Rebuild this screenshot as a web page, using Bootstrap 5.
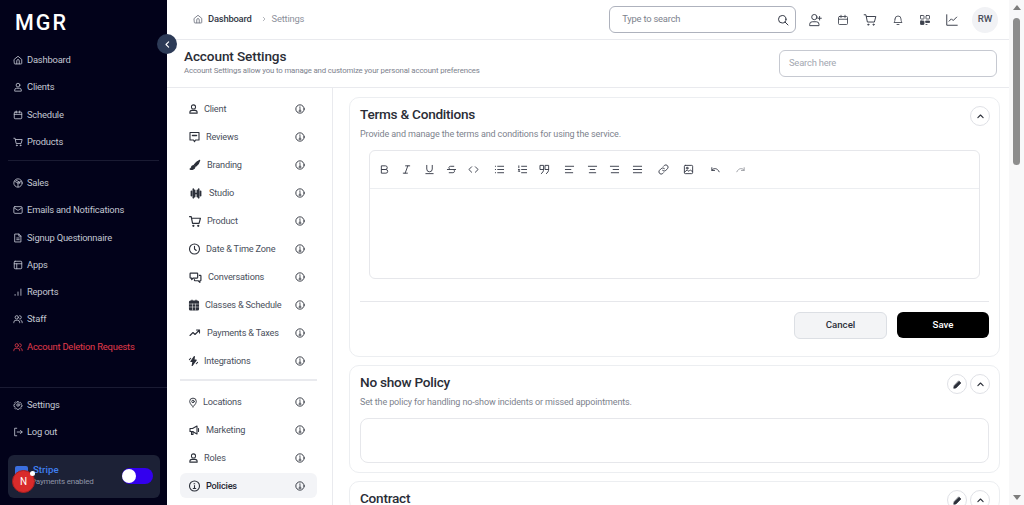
<!DOCTYPE html>
<html lang="en">
<head>
    <meta charset="UTF-8">
    <meta name="viewport" content="width=device-width, initial-scale=1.0">
    <title>Account Settings</title>
    <link href="https://cdn.jsdelivr.net/npm/bootstrap@5.3.0/dist/css/bootstrap.min.css" rel="stylesheet">
    <style>
        html, body { height: 505px; overflow: hidden; }
        body { font-family: Roboto, "Noto Sans", sans-serif; color: #1f2430; background: #fff; }
        .ic { fill: none; stroke: currentColor; stroke-width: 2; stroke-linecap: round; stroke-linejoin: round; flex: none; }
        .page-wrap { height: 505px; }

        /* sidebar */
        .side { width: 167px; flex: none; background: #02021a; color: #c3c7d2; height: 505px; }
        .side-logo { color: #fff; font-size: 21.5px; font-weight: 500; letter-spacing: 2px; padding: 9px 0 0 15px; height: 46.5px; line-height: 27px; }
        .side-link { height: 27.25px; flex: none; padding-left: 13px; gap: 4px; font-size: 9.4px; letter-spacing: -.2px; color: #c3c7d2; text-decoration: none; }
        .side-link.danger { color: #e23b4b; }
        .side-rule { height: 1px; background: #1a1b33; flex: none; }
        .side-rule.upper { margin: 4px 8px 9px; }
        .side-rule.lower { margin-bottom: 4px; }
        .stripe-box { margin: 9px 7px 7px 8px; height: 43px; background: #1c2136; border-radius: 6px; }
        .stripe-flag { width: 13px; height: 11px; background: #3b6fe0; border-radius: 2px; position: absolute; left: 7px; top: 11px; }
        .stripe-name { color: #3f7ff0; font-size: 9.7px; font-weight: 500; line-height: 12px; padding-left: 25px; padding-top: 9px; }
        .stripe-sub { color: #8f94a6; font-size: 8px; letter-spacing: -.2px; line-height: 11px; padding-left: 23px; white-space: nowrap; }
        .stripe-toggle { position: absolute; right: 7px; top: 13px; width: 31px; height: 16px; border-radius: 8px; background: #3300ee; }
        .stripe-toggle i { position: absolute; left: 0; top: 1px; width: 14px; height: 14px; border-radius: 50%; background: #fff; }
        .dev-badge { position: absolute; left: 12px; top: 470px; width: 23px; height: 23px; border-radius: 50%; background: #d92b2b; color: #fff; font-size: 10px; line-height: 21px; text-align: center; border: 1px solid #a81f1f; }
        .dev-dot { position: absolute; left: 30px; top: 471px; width: 5px; height: 5px; border-radius: 50%; background: #fff; }
        .collapse-btn { position: absolute; left: 157px; top: 34px; width: 20px; height: 20px; border-radius: 50%; background: #2d3b57; color: #fff; z-index: 5; }

        /* header */
        .top-bar { height: 40px; flex: none; border-bottom: 1px solid #e9eaee; padding-left: 26px; padding-right: 11px; }
        .crumb { font-size: 9.4px; letter-spacing: -.2px; color: #8c909b; }
        .crumb b { color: #333845; font-weight: 500; }
        .crumb-home { color: #6b707c; margin-right: 5px; }
        .crumb-sep { color: #6b707c; margin: 0 5px 0 9px; }
        .top-search { width: 187px; height: 27px; flex: none; border: 1px solid #aeb2bd; border-radius: 6px; padding: 0 6px 0 12px; font-size: 9.4px; letter-spacing: -.2px; color: #7d828d; margin-right: 5.5px; }
        .top-search .ic { color: #333845; }
        .top-icon { width: 27.4px; color: #3d424e; }
        .top-icon .ic { stroke-width: 1.7; }
        .avatar-rw { width: 26px; height: 26px; margin-left: 6px; border-radius: 50%; background: #f1f2f5; color: #4a4f5c; font-size: 9.7px; font-weight: 500; }

        /* title row */
        .title-row { height: 48px; flex: none; border-bottom: 1px solid #e9eaee; padding: 0 12px 0 17px; }
        .title-block { padding-bottom: 3px; }
        .title-row h1 { font-size: 13.6px; font-weight: 500; letter-spacing: -.12px; margin: 0; line-height: 17px; color: #2a2d36; }
        .title-row p { font-size: 7.8px; letter-spacing: -.14px; color: #7d828d; margin: 0; line-height: 11px; }
        .page-search { width: 218px; height: 27px; border: 1px solid #c6c9d1; border-radius: 6px; padding-left: 9px; font-size: 9.4px; letter-spacing: -.2px; color: #a3a7b1; }

        /* settings menu */
        .set-menu { width: 166px; border-right: 1px solid #e9eaee; padding: 7px 15px 0 13px; flex: none; height: 417px; }
        .set-item { height: 28px; font-size: 9.2px; letter-spacing: -.2px; color: #4a4f5c; padding: 0 12px 0 8px; border-radius: 6px; }
        .set-item .ic { color: #2c303a; stroke-width: 2.2; }
        .set-item .name { flex: 1; margin-left: 5px; white-space: nowrap; }
        .set-item.on { background: #f3f4f7; color: #1f2430; font-weight: 500; height: 25px; margin-top: 1px; }
        .set-rule { height: 2px; background: #e9eaee; margin: 4px 0 7px; }

        /* panels */
        .panels { padding: 9px 9px 0 16px; flex: 1; min-width: 0; }
        .panel { border: 1px solid #eceef1; border-radius: 10px; padding: 6px 9px 0 10px; margin-bottom: 8px; flex: none; }
        .panel h2 { font-size: 13.6px; font-weight: 500; letter-spacing: -.25px; margin: 0; line-height: 20px; color: #2a2d36; }
        .panel p { font-size: 9px; letter-spacing: -.13px; color: #7d828d; margin: 3px 0 0; line-height: 14px; }
        .round-btn { width: 20px; height: 20px; margin-top: 2px; border: 1px solid #dfe1e6; border-radius: 50%; color: #2c303a; background: #fff; }
        .editor { margin: 9px 10px 0 9px; height: 129px; border: 1px solid #e6e7eb; border-radius: 6px; }
        .editor-tools { height: 38px; border-bottom: 1px solid #eceef1; padding-left: 3px; color: #333845; }
        .tool { width: 22.45px; display: flex; justify-content: center; }
        .tool-gap-s { margin-left: 2.5px; }
        .tool-gap-m { margin-left: 3.5px; }
        .tool-gap-l { margin-left: 4.5px; }
        .panel-rule { height: 1px; background: #e6e7eb; margin: 22px 1px 0 0; }
        .btn-row { gap: 10px; margin: 10px 1px 0 0; }
        .btn-cancel { width: 93px; height: 27px; background: #f3f4f6; border: 1px solid #dcdfe4; border-radius: 6px; color: #2c303a; font-size: 9.7px; font-weight: 500; padding: 0; }
        .btn-save { width: 92px; height: 26px; background: #000; border: 0; border-radius: 6px; color: #fff; font-size: 9.7px; font-weight: 500; padding: 0; }
        .policy-box { height: 45px; border: 1px solid #e6e7eb; border-radius: 8px; margin: 9px 1px 0 0; }
        .btn-pair { gap: 3px; }

        /* scrollbar */
        .fake-scroll { width: 15px; background: #f8f8f9; flex: none; }
        .fake-thumb { width: 7px; height: 147px; background: #8d8d8d; border-radius: 4px; margin: 18px auto 0; }
        .arrow-up { position: absolute; left: 1013px; top: 5px; border: 4px solid transparent; border-top: 0; border-bottom: 5px solid #7d7d7d; }
        .arrow-down { position: absolute; left: 1013px; top: 495px; border: 4px solid transparent; border-bottom: 0; border-top: 5px solid #7d7d7d; }
    </style>
</head>
<body>
    <svg width="0" height="0" class="position-absolute">
        <symbol id="home" viewBox="0 0 24 24"><path d="M3 10.500 12 3l9 7.500V20a1.500 1.500 0 0 1-1.500 1.500h-15A1.500 1.500 0 0 1 3 20z"/><path d="M9 21v-7a3 3 0 0 1 6 0v7"/></symbol>
        <symbol id="user" viewBox="0 0 24 24"><circle cx="12" cy="7.500" r="4.500"/><path d="M4 21v-1.500A4.500 4.500 0 0 1 8.500 15h7a4.500 4.500 0 0 1 4.500 4.500V21z"/></symbol>
        <symbol id="cal" viewBox="0 0 24 24"><rect x="3" y="5" width="18" height="16" rx="2"/><path d="M8 2.500V7M16 2.500V7M3 10.500h18"/></symbol>
        <symbol id="cart" viewBox="0 0 24 24"><path d="M2 3h3l2.500 12.500h12L22 6H6"/><circle cx="9" cy="20" r="1"/><circle cx="18" cy="20" r="1"/></symbol>
        <symbol id="box" viewBox="0 0 24 24"><circle cx="12" cy="12" r="10"/><path d="M12 12 4 8M12 12l8-4M12 12v9M8 5.500l8 4.500v3"/></symbol>
        <symbol id="mail" viewBox="0 0 24 24"><rect x="2" y="4" width="20" height="16" rx="2.500"/><path d="m3 7 9 6 9-6"/></symbol>
        <symbol id="file" viewBox="0 0 24 24"><path d="M5 2.500h9l5 5V21.500H5z"/><path d="M14 2.500v5h5M9 12h6M9 16h6"/></symbol>
        <symbol id="apps" viewBox="0 0 24 24"><rect x="3" y="3" width="18" height="18" rx="2"/><path d="M3 9h18M9 9v12"/></symbol>
        <symbol id="bars" viewBox="0 0 24 24"><path d="M5 20v-2M12 20v-8M19 20V5"/></symbol>
        <symbol id="users" viewBox="0 0 24 24"><circle cx="9" cy="8" r="4"/><path d="M2 21v-1a5 5 0 0 1 5-5h4a5 5 0 0 1 5 5v1M16 4a4 4 0 0 1 0 8M19 15a4.500 4.500 0 0 1 3 4.500V21"/></symbol>
        <symbol id="gear" viewBox="0 0 24 24"><circle cx="12" cy="12" r="3"/><path d="M10.300 3h3.400l.6 2.700 1.900.8 2.300-1.500 2.400 2.400-1.500 2.300.8 1.900 2.700.6v3.400l-2.700.6-.8 1.900 1.500 2.300-2.400 2.400-2.300-1.500-1.900.8-.6 2.700h-3.400l-.6-2.700-1.900-.8-2.300 1.500-2.400-2.400 1.500-2.300-.8-1.900-2.700-.6V10.800l2.700-.6.8-1.900L3.100 6l2.400-2.400 2.300 1.500 1.900-.8z" transform="translate(1.200 1.200) scale(.9)"/></symbol>
        <symbol id="logout" viewBox="0 0 24 24"><path d="M9 3H4v18h5M10 12h12M18 8l4 4-4 4"/></symbol>
        <symbol id="info" viewBox="0 0 24 24"><circle cx="12" cy="12" r="10"/><path d="M12 11v6M9.500 17h5M11 7.500h1.500"/></symbol>
        <symbol id="search" viewBox="0 0 24 24"><circle cx="10.500" cy="10.500" r="7.500"/><path d="m16 16 6 6"/></symbol>
        <symbol id="adduser" viewBox="0 0 24 24"><circle cx="10" cy="7" r="4.500"/><path d="M2 21v-1.500A4.500 4.500 0 0 1 6.500 15h7a4.500 4.500 0 0 1 4.500 4.500V21zM19 6v6M16 9h6"/></symbol>
        <symbol id="bell" viewBox="0 0 24 24"><path d="M6 10a6 6 0 0 1 12 0c0 5 2 7 2 7H4s2-2 2-7M10 21h4"/></symbol>
        <symbol id="qr" viewBox="0 0 24 24"><rect x="3" y="3" width="7" height="7" rx="1"/><rect x="14" y="3" width="7" height="7" rx="1"/><rect x="3" y="14" width="7" height="7" rx="1" fill="currentColor"/><path d="M14 14h7v3h-7zM14 21h2" fill="currentColor"/></symbol>
        <symbol id="chart" viewBox="0 0 24 24"><path d="M3 3v18h18M7 14l4-4 3 3 6-6"/></symbol>
        <symbol id="chat" viewBox="0 0 24 24"><path d="M3 3h18v15h-7l-2 3.500-2-3.500H3z"/><path d="M8 9h8" stroke-width="3"/></symbol>
        <symbol id="brush" viewBox="0 0 24 24"><path d="M21.500 2.500c-5 2-9 6-11 9l3 3c3-2 7-6 8-12z" fill="currentColor"/><path d="M9 13c-3 0-4 2-4.500 4.500-.3 1.500-1.500 2-2.500 2.500 3 2 9 1 10-4z" fill="currentColor"/></symbol>
        <symbol id="dumb" viewBox="0 0 24 24"><path d="M9 12h6" stroke-width="2.500"/><path d="M7 4v16M9.500 6v12M17 4v16M14.500 6v12M3.500 8v8M20.500 8v8" stroke-width="3"/></symbol>
        <symbol id="clock" viewBox="0 0 24 24"><circle cx="12" cy="12" r="10"/><path d="M12 6.500V12l3.500 3"/></symbol>
        <symbol id="chats" viewBox="0 0 24 24"><path d="M3 4h12a1 1 0 0 1 1 1v7a1 1 0 0 1-1 1H8l-3 3v-3H3a1 1 0 0 1-1-1V5a1 1 0 0 1 1-1z"/><path d="M19 8h2a1 1 0 0 1 1 1v8a1 1 0 0 1-1 1h-1v3l-3-3h-6a1 1 0 0 1-1-1v-1"/></symbol>
        <symbol id="grid" viewBox="0 0 24 24"><rect x="3" y="4" width="18" height="18" rx="2" fill="currentColor"/><path d="M3 10h18M9 10v12M15 10v12M3 16h18" stroke="#fff" stroke-width="1"/><path d="M8 2v3M16 2v3"/></symbol>
        <symbol id="trend" viewBox="0 0 24 24"><path d="m2 17 6-6 4 4 9-9M15 6h6v6"/></symbol>
        <symbol id="bolt" viewBox="0 0 24 24"><path d="M14 2 6 13h5l-2 9 9-12h-5z" fill="currentColor"/><path d="M3 9l3-3M21 15l-3 3"/></symbol>
        <symbol id="pin" viewBox="0 0 24 24"><path d="M12 22s8-6.500 8-12.500a8 8 0 0 0-16 0C4 15.500 12 22 12 22z"/><circle cx="12" cy="9.500" r="3"/></symbol>
        <symbol id="mega" viewBox="0 0 24 24"><path d="M3 9h5l9-5v16l-9-5H3z"/><path d="M6 15v6h3v-6M20 9v6"/></symbol>
        <symbol id="left" viewBox="0 0 24 24"><path d="m15 5-7 7 7 7" stroke-width="3"/></symbol>
        <symbol id="right" viewBox="0 0 24 24"><path d="m9 5 7 7-7 7"/></symbol>
        <symbol id="up" viewBox="0 0 24 24"><path d="m5 15 7-7 7 7" stroke-width="3"/></symbol>
        <symbol id="pencil" viewBox="0 0 24 24"><path d="M16 3l5 5L8 21l-6 1 1-6z" fill="currentColor"/></symbol>
        <symbol id="bold" viewBox="0 0 24 24"><path d="M6 4h8a4 4 0 0 1 0 8H6zM6 12h9a4 4 0 0 1 0 8H6z"/></symbol>
        <symbol id="italic" viewBox="0 0 24 24"><path d="M10 4h9M5 20h9M15 4 9 20"/></symbol>
        <symbol id="under" viewBox="0 0 24 24"><path d="M6 3v8a6 6 0 0 0 12 0V3M4 21h16"/></symbol>
        <symbol id="strike" viewBox="0 0 24 24"><path d="M3 12h18M17 5H10a3.500 3.500 0 0 0-2 6.500M7 19h8a3.500 3.500 0 0 0 2.500-6"/></symbol>
        <symbol id="code" viewBox="0 0 24 24"><path d="M8 6l-6 6 6 6M16 6l6 6-6 6"/></symbol>
        <symbol id="ul" viewBox="0 0 24 24"><path d="M8 5h13M8 12h13M8 19h13M3 5h.5M3 12h.5M3 19h.5"/></symbol>
        <symbol id="ol" viewBox="0 0 24 24"><path d="M10 5h11M10 12h11M10 19h11M4 4v4M3 12h3l-3 4h3"/></symbol>
        <symbol id="quote" viewBox="0 0 24 24"><path d="M3 3h7v9H3zM14 3h7v9h-7zM10 12c0 4-2 7-5 9M21 12c0 4-2 7-5 9"/></symbol>
        <symbol id="al" viewBox="0 0 24 24"><path d="M3 5h18M3 12h12M3 19h16"/></symbol>
        <symbol id="ac" viewBox="0 0 24 24"><path d="M3 5h18M7 12h10M5 19h14"/></symbol>
        <symbol id="ar" viewBox="0 0 24 24"><path d="M3 5h18M9 12h12M5 19h16"/></symbol>
        <symbol id="aj" viewBox="0 0 24 24"><path d="M3 5h18M3 12h18M3 19h18"/></symbol>
        <symbol id="link" viewBox="0 0 24 24"><path d="M10 14a5 5 0 0 0 7 0l4-4a5 5 0 0 0-7-7l-2 2"/><path d="M14 10a5 5 0 0 0-7 0l-4 4a5 5 0 0 0 7 7l2-2"/></symbol>
        <symbol id="image" viewBox="0 0 24 24"><rect x="3" y="3" width="18" height="18" rx="2"/><circle cx="9" cy="9" r="2"/><path d="m3 18 6-5 4 3 3-3 5 4"/></symbol>
        <symbol id="undo" viewBox="0 0 24 24"><path d="M4 8v6h6M4 14c3-6 12-6 16 3"/></symbol>
        <symbol id="redo" viewBox="0 0 24 24"><path d="M20 8v6h-6M20 14c-3-6-12-6-16 3"/></symbol>
    </svg>

    <div class="d-flex page-wrap position-relative">
        <aside class="side d-flex flex-column">
            <div class="side-logo">MGR</div>
            <a class="side-link d-flex align-items-center" href="#"><svg class="ic" width="10" height="10"><use href="#home"/></svg>Dashboard</a>
            <a class="side-link d-flex align-items-center" href="#"><svg class="ic" width="10" height="10"><use href="#user"/></svg>Clients</a>
            <a class="side-link d-flex align-items-center" href="#"><svg class="ic" width="10" height="10"><use href="#cal"/></svg>Schedule</a>
            <a class="side-link d-flex align-items-center" href="#"><svg class="ic" width="10" height="10"><use href="#cart"/></svg>Products</a>
            <div class="side-rule upper"></div>
            <a class="side-link d-flex align-items-center" href="#"><svg class="ic" width="10" height="10"><use href="#box"/></svg>Sales</a>
            <a class="side-link d-flex align-items-center" href="#"><svg class="ic" width="10" height="10"><use href="#mail"/></svg>Emails and Notifications</a>
            <a class="side-link d-flex align-items-center" href="#"><svg class="ic" width="10" height="10"><use href="#file"/></svg>Signup Questionnaire</a>
            <a class="side-link d-flex align-items-center" href="#"><svg class="ic" width="10" height="10"><use href="#apps"/></svg>Apps</a>
            <a class="side-link d-flex align-items-center" href="#"><svg class="ic" width="10" height="10"><use href="#bars"/></svg>Reports</a>
            <a class="side-link d-flex align-items-center" href="#"><svg class="ic" width="10" height="10"><use href="#users"/></svg>Staff</a>
            <a class="side-link danger d-flex align-items-center" href="#"><svg class="ic" width="10" height="10"><use href="#users"/></svg>Account Deletion Requests</a>
            <div class="mt-auto">
                <div class="side-rule lower"></div>
                <a class="side-link d-flex align-items-center" href="#"><svg class="ic" width="10" height="10"><use href="#gear"/></svg>Settings</a>
                <a class="side-link d-flex align-items-center" href="#"><svg class="ic" width="10" height="10"><use href="#logout"/></svg>Log out</a>
                <div class="stripe-box position-relative">
                    <span class="stripe-flag"></span>
                    <div class="stripe-name">Stripe</div>
                    <div class="stripe-sub">Payments enabled</div>
                    <span class="stripe-toggle"><i></i></span>
                </div>
            </div>
        </aside>

        <span class="dev-badge">N</span>
        <span class="dev-dot"></span>
        <button class="collapse-btn d-flex align-items-center justify-content-center border-0 p-0"><svg class="ic" width="9" height="9"><use href="#left"/></svg></button>

        <div class="flex-fill d-flex flex-column" style="min-width:0">
            <header class="top-bar d-flex align-items-center">
                <div class="crumb d-flex align-items-center flex-fill">
                    <svg class="ic crumb-home" width="10" height="10"><use href="#home"/></svg>
                    <b>Dashboard</b>
                    <svg class="ic crumb-sep" width="6" height="6"><use href="#right"/></svg>
                    <span>Settings</span>
                </div>
                <div class="top-search d-flex align-items-center justify-content-between">
                    <span>Type to search</span>
                    <svg class="ic" width="12" height="12"><use href="#search"/></svg>
                </div>
                <span class="top-icon d-flex justify-content-center"><svg class="ic" width="15" height="14"><use href="#adduser"/></svg></span>
                <span class="top-icon d-flex justify-content-center"><svg class="ic" width="12" height="12"><use href="#cal"/></svg></span>
                <span class="top-icon d-flex justify-content-center"><svg class="ic" width="14" height="14"><use href="#cart"/></svg></span>
                <span class="top-icon d-flex justify-content-center"><svg class="ic" width="12" height="12"><use href="#bell"/></svg></span>
                <span class="top-icon d-flex justify-content-center"><svg class="ic" width="12" height="12"><use href="#qr"/></svg></span>
                <span class="top-icon d-flex justify-content-center"><svg class="ic" width="14" height="14"><use href="#chart"/></svg></span>
                <span class="avatar-rw d-flex align-items-center justify-content-center">RW</span>
            </header>

            <div class="title-row d-flex align-items-center justify-content-between">
                <div class="title-block">
                    <h1>Account Settings</h1>
                    <p>Account Settings allow you to manage and customize your personal account preferences</p>
                </div>
                <div class="page-search d-flex align-items-center">Search here</div>
            </div>

            <div class="d-flex">
                <nav class="set-menu">
                    <div class="set-item d-flex align-items-center"><svg class="ic" width="11" height="12"><use href="#user"/></svg><span class="name">Client</span><svg class="ic" width="10" height="10"><use href="#info"/></svg></div>
                    <div class="set-item d-flex align-items-center"><svg class="ic" width="13" height="12"><use href="#chat"/></svg><span class="name">Reviews</span><svg class="ic" width="10" height="10"><use href="#info"/></svg></div>
                    <div class="set-item d-flex align-items-center"><svg class="ic" width="14" height="12"><use href="#brush"/></svg><span class="name">Branding</span><svg class="ic" width="10" height="10"><use href="#info"/></svg></div>
                    <div class="set-item d-flex align-items-center"><svg class="ic" width="16" height="13"><use href="#dumb"/></svg><span class="name">Studio</span><svg class="ic" width="10" height="10"><use href="#info"/></svg></div>
                    <div class="set-item d-flex align-items-center"><svg class="ic" width="14" height="13"><use href="#cart"/></svg><span class="name">Product</span><svg class="ic" width="10" height="10"><use href="#info"/></svg></div>
                    <div class="set-item d-flex align-items-center"><svg class="ic" width="13" height="12"><use href="#clock"/></svg><span class="name">Date &amp; Time Zone</span><svg class="ic" width="10" height="10"><use href="#info"/></svg></div>
                    <div class="set-item d-flex align-items-center"><svg class="ic" width="15" height="13"><use href="#chats"/></svg><span class="name">Conversations</span><svg class="ic" width="10" height="10"><use href="#info"/></svg></div>
                    <div class="set-item d-flex align-items-center"><svg class="ic" width="12" height="12"><use href="#grid"/></svg><span class="name">Classes &amp; Schedule</span><svg class="ic" width="10" height="10"><use href="#info"/></svg></div>
                    <div class="set-item d-flex align-items-center"><svg class="ic" width="14" height="12"><use href="#trend"/></svg><span class="name">Payments &amp; Taxes</span><svg class="ic" width="10" height="10"><use href="#info"/></svg></div>
                    <div class="set-item d-flex align-items-center"><svg class="ic" width="11" height="12"><use href="#bolt"/></svg><span class="name">Integrations</span><svg class="ic" width="10" height="10"><use href="#info"/></svg></div>
                    <div class="set-rule"></div>
                    <div class="set-item d-flex align-items-center"><svg class="ic" width="10" height="11"><use href="#pin"/></svg><span class="name">Locations</span><svg class="ic" width="10" height="10"><use href="#info"/></svg></div>
                    <div class="set-item d-flex align-items-center"><svg class="ic" width="13" height="12"><use href="#mega"/></svg><span class="name">Marketing</span><svg class="ic" width="10" height="10"><use href="#info"/></svg></div>
                    <div class="set-item d-flex align-items-center"><svg class="ic" width="11" height="12"><use href="#user"/></svg><span class="name">Roles</span><svg class="ic" width="10" height="10"><use href="#info"/></svg></div>
                    <div class="set-item on d-flex align-items-center"><svg class="ic" width="13" height="12"><use href="#info"/></svg><span class="name">Policies</span><svg class="ic" width="10" height="10"><use href="#info"/></svg></div>
                </nav>

                <main class="panels">
                    <section class="panel" style="height:260px">
                        <div class="d-flex justify-content-between">
                            <div>
                                <h2>Terms &amp; Conditions</h2>
                                <p>Provide and manage the terms and conditions for using the service.</p>
                            </div>
                            <button class="round-btn d-flex align-items-center justify-content-center p-0"><svg class="ic" width="9" height="9"><use href="#up"/></svg></button>
                        </div>
                        <div class="editor">
                            <div class="editor-tools d-flex align-items-center">
                                <span class="tool"><svg class="ic" width="11" height="11"><use href="#bold"/></svg></span>
                                <span class="tool"><svg class="ic" width="11" height="11"><use href="#italic"/></svg></span>
                                <span class="tool"><svg class="ic" width="11" height="11"><use href="#under"/></svg></span>
                                <span class="tool"><svg class="ic" width="11" height="11"><use href="#strike"/></svg></span>
                                <span class="tool"><svg class="ic" width="11" height="11"><use href="#code"/></svg></span>
                                <span class="tool tool-gap-m"><svg class="ic" width="11" height="11"><use href="#ul"/></svg></span>
                                <span class="tool"><svg class="ic" width="11" height="11"><use href="#ol"/></svg></span>
                                <span class="tool"><svg class="ic" width="11" height="11"><use href="#quote"/></svg></span>
                                <span class="tool tool-gap-s"><svg class="ic" width="11" height="11"><use href="#al"/></svg></span>
                                <span class="tool"><svg class="ic" width="11" height="11"><use href="#ac"/></svg></span>
                                <span class="tool"><svg class="ic" width="11" height="11"><use href="#ar"/></svg></span>
                                <span class="tool"><svg class="ic" width="11" height="11"><use href="#aj"/></svg></span>
                                <span class="tool tool-gap-l"><svg class="ic" width="11" height="11"><use href="#link"/></svg></span>
                                <span class="tool tool-gap-s"><svg class="ic" width="11" height="11"><use href="#image"/></svg></span>
                                <span class="tool tool-gap-l"><svg class="ic" width="11" height="11"><use href="#undo"/></svg></span>
                                <span class="tool tool-gap-s opacity-50"><svg class="ic" width="11" height="11"><use href="#redo"/></svg></span>
                            </div>
                        </div>
                        <div class="panel-rule"></div>
                        <div class="btn-row d-flex justify-content-end align-items-start">
                            <button class="btn-cancel">Cancel</button>
                            <button class="btn-save">Save</button>
                        </div>
                    </section>

                    <section class="panel" style="height:108px">
                        <div class="d-flex justify-content-between">
                            <div>
                                <h2>No show Policy</h2>
                                <p>Set the policy for handling no-show incidents or missed appointments.</p>
                            </div>
                            <div class="btn-pair d-flex">
                                <button class="round-btn d-flex align-items-center justify-content-center p-0"><svg class="ic" width="9" height="9"><use href="#pencil"/></svg></button>
                                <button class="round-btn d-flex align-items-center justify-content-center p-0"><svg class="ic" width="9" height="9"><use href="#up"/></svg></button>
                            </div>
                        </div>
                        <div class="policy-box"></div>
                    </section>

                    <section class="panel">
                        <div class="d-flex justify-content-between">
                            <h2>Contract</h2>
                            <div class="btn-pair d-flex">
                                <button class="round-btn d-flex align-items-center justify-content-center p-0"><svg class="ic" width="9" height="9"><use href="#pencil"/></svg></button>
                                <button class="round-btn d-flex align-items-center justify-content-center p-0"><svg class="ic" width="9" height="9"><use href="#up"/></svg></button>
                            </div>
                        </div>
                    </section>
                </main>
            </div>
        </div>

        <div class="fake-scroll"><div class="fake-thumb"></div></div>
        <span class="arrow-up"></span>
        <span class="arrow-down"></span>
    </div>

    <script src="https://cdn.jsdelivr.net/npm/bootstrap@5.3.0/dist/js/bootstrap.bundle.min.js"></script>
</body>
</html>
